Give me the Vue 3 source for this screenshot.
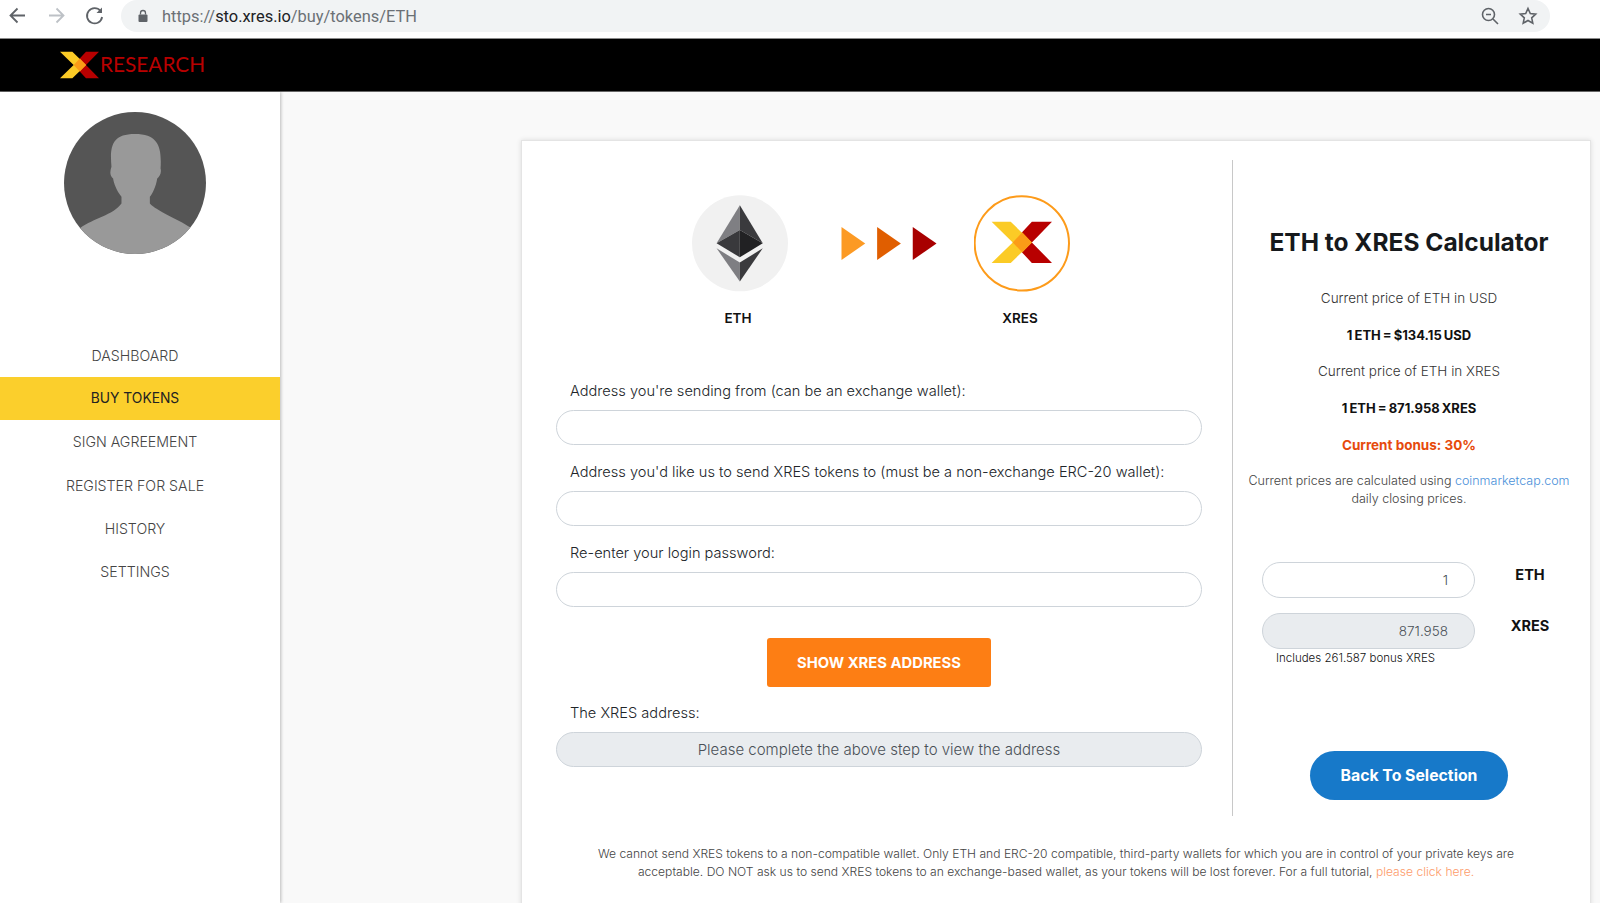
<script setup>
const navItems = ['DASHBOARD', 'BUY TOKENS', 'SIGN AGREEMENT', 'REGISTER FOR SALE', 'HISTORY', 'SETTINGS']
const fields = [
  "Address you're sending from (can be an exchange wallet):",
  "Address you'd like us to send XRES tokens to (must be a non-exchange ERC-20 wallet):",
  'Re-enter your login password:'
]
</script>

<template>
  <div class="page">
    <div class="browser">
      <svg class="nav-icon" width="38" height="32" viewBox="0 0 38 32" fill="none" stroke="#5f6368" stroke-width="1.8">
        <path d="M25 15.5H11M17.5 8.5l-7 7 7 7" />
      </svg>
      <svg class="nav-icon" width="38" height="32" viewBox="0 0 38 32" fill="none" stroke="#bdc1c6" stroke-width="1.8">
        <path d="M11 15.5h14M18.5 8.5l7 7-7 7" />
      </svg>
      <svg class="nav-icon" width="38" height="32" viewBox="0 0 38 32" fill="none" stroke="#5f6368" stroke-width="1.8">
        <path d="M24.5 11a7.6 7.6 0 1 0 1.6 6" />
        <path d="M26 7.5v5.5h-5.5z" fill="#5f6368" stroke="none" />
      </svg>
      <div class="omnibox">
        <svg width="12" height="14" viewBox="0 0 12 14">
          <path d="M3.5 5.5V4a2.500 2.500 0 0 1 5 0v1.500" fill="none" stroke="#5f6368" stroke-width="1.300" />
          <rect x="1.500" y="5.500" width="9" height="7.500" rx="1" fill="#5f6368" />
        </svg>
        <span class="url">https://<b>sto.xres.io</b>/buy/tokens/ETH</span>
        <svg class="zoom-icon" width="20" height="20" viewBox="0 0 20 20" fill="none" stroke="#5f6368" stroke-width="1.600">
          <circle cx="8.500" cy="8.500" r="6" />
          <path d="M13 13l5 5M6 8.500h5" />
        </svg>
        <svg class="star-icon" width="20" height="20" viewBox="0 0 20 20" fill="none" stroke="#5f6368" stroke-width="1.600">
          <path d="M10 2.500l2.300 5 5.400.6-4 3.700 1.100 5.400-4.800-2.700-4.800 2.700 1.100-5.400-4-3.700 5.400-.6z" />
        </svg>
      </div>
    </div>

    <header class="topbar">
      <svg class="logo" width="39" height="28" viewBox="0 0 60 41">
        <polygon points="40,0 60,0 40,20.500 60,41 40,41 21,20.500" fill="#b80000" />
        <polygon points="0,0 19,0 40,20.500 19,41 0,41 21,20.500" fill="#fbcb26" />
        <polygon points="30.500,10.500 40,20.500 30.500,30.500 21,20.500" fill="#fb9c17" />
      </svg>
      <span class="brand">RESEARCH</span>
    </header>

    <div class="body">
      <aside class="sidebar">
        <svg class="avatar" width="142" height="142" viewBox="193 336 425 425">
          <circle cx="405.500" cy="548.500" r="212.500" fill="#555" />
          <clipPath id="avatar-clip"><circle cx="405.500" cy="548.500" r="212.500" /></clipPath>
          <path clip-path="url(#avatar-clip)" fill="#999"
            d="M335 500C330 440 335 402 405 402C475 402 486 440 482 505C486 520 478 530 472 535C468 560 458 580 450 590V610C470 632 530 655 572 682L620 800H190L243 682C280 655 340 645 365 610V590C350 570 342 550 340 535C330 528 330 515 335 500Z" />
        </svg>
        <nav class="menu">
          <a v-for="item in navItems" :key="item" class="menu-item" :class="{ active: item === 'BUY TOKENS' }">{{ item }}</a>
        </nav>
      </aside>

      <main class="main">
        <section class="card">
          <div class="columns">
            <div class="left">
              <div class="swap">
                <div class="coin">
                  <svg width="96" height="97" viewBox="96 75 289 291">
                    <circle cx="240.500" cy="220" r="144.500" fill="#f1f1f1" />
                    <polygon points="240,105 170,220 240,180" fill="#7f7f83" />
                    <polygon points="240,105 309,220 240,180" fill="#3a3a3d" />
                    <polygon points="170,220 240,180 240,262" fill="#39393c" />
                    <polygon points="309,220 240,180 240,262" fill="#212123" />
                    <polygon points="170,235 240,278 240,335" fill="#7e7e82" />
                    <polygon points="309,235 240,278 240,335" fill="#3a3a3d" />
                  </svg>
                  <span class="coin-name">ETH</span>
                </div>
                <svg class="arrows" width="96" height="33" viewBox="543 170 288 100">
                  <polygon points="543,170 615,220 543,270" fill="#fc9a24" />
                  <polygon points="651,170 723,220 651,270" fill="#e05e00" />
                  <polygon points="759,170 831,220 759,270" fill="#a80000" />
                </svg>
                <div class="coin">
                  <svg width="96" height="97" viewBox="942 75 289 291">
                    <circle cx="1086" cy="220" r="142" fill="#fff" stroke="#fd9b1a" stroke-width="6" />
                    <g transform="translate(995 155) scale(3.030)">
                      <polygon points="40,0 60,0 40,20.500 60,41 40,41 21,20.500" fill="#b80000" />
                      <polygon points="0,0 19,0 40,20.500 19,41 0,41 21,20.500" fill="#fbcb26" />
                      <polygon points="30.500,10.500 40,20.500 30.500,30.500 21,20.500" fill="#fb9c17" />
                    </g>
                  </svg>
                  <span class="coin-name">XRES</span>
                </div>
              </div>

              <div v-for="label in fields" :key="label" class="field">
                <label>{{ label }}</label>
                <input class="pill" type="text" />
              </div>

              <div class="action">
                <button class="show-btn" type="button">SHOW XRES ADDRESS</button>
              </div>

              <div class="field address">
                <label>The XRES address:</label>
                <input class="pill center" type="text" readonly value="Please complete the above step to view the address" />
              </div>
            </div>

            <div class="right">
              <h2>ETH to XRES Calculator</h2>
              <p class="line first">Current price of ETH in USD</p>
              <p class="line strong">1 ETH = $134.15 USD</p>
              <p class="line">Current price of ETH in XRES</p>
              <p class="line strong">1 ETH = 871.958 XRES</p>
              <p class="line bonus">Current bonus: 30%</p>
              <p class="note">Current prices are calculated using <a>coinmarketcap.com</a><br />daily closing prices.</p>

              <div class="calc">
                <div class="calc-row">
                  <input class="pill amount" type="text" value="1" />
                  <span class="unit">ETH</span>
                </div>
                <div class="calc-row">
                  <input class="pill amount" type="text" readonly value="871.958" />
                  <span class="unit">XRES</span>
                </div>
                <small>Includes 261.587 bonus XRES</small>
              </div>

              <button class="back-btn" type="button">Back To Selection</button>
            </div>
          </div>

          <p class="disclaimer">
            We cannot send XRES tokens to a non-compatible wallet. Only ETH and ERC-20 compatible, third-party wallets for which you are in control of your private keys are<br />
            acceptable. DO NOT ask us to send XRES tokens to an exchange-based wallet, as your tokens will be lost forever. For a full tutorial, <a>please click here.</a>
          </p>
        </section>
      </main>
    </div>
  </div>
</template>

<style scoped>
.page {
  height: 903px;
  overflow: hidden;
  display: flex;
  flex-direction: column;
  background: #fff;
  font-family: Inter, "Liberation Sans", sans-serif;
  color: #212529;
}

.browser {
  height: 38px;
  flex: none;
  display: flex;
  align-items: flex-start;
  border-bottom: 1px solid #8a8a8a;
  background: #fff;
}

.nav-icon {
  flex: none;
}

.omnibox {
  margin-left: 7px;
  width: 1429px;
  height: 32px;
  display: flex;
  align-items: center;
  padding-left: 16px;
  box-sizing: border-box;
  background: #f1f3f4;
  border-radius: 0 16px 16px 16px;
  border-top-left-radius: 16px;
}

.url {
  margin-left: 13px;
  font-family: Roboto, sans-serif;
  font-size: 16.400px;
  color: #6b7075;
}

.url b {
  font-weight: 400;
  color: #202124;
}

.zoom-icon {
  margin-left: auto;
}

.star-icon {
  margin-left: 18px;
  margin-right: 12px;
}

.topbar {
  height: 52px;
  flex: none;
  display: flex;
  align-items: center;
  padding-left: 60px;
  background: #000;
  border-bottom: 1px solid #666;
}

.brand {
  margin-left: 1px;
  margin-bottom: 3px;
  font-family: Lato, sans-serif;
  font-weight: 400;
  font-size: 20.800px;
  color: #b80000;
}

.body {
  flex: 1;
  display: flex;
  min-height: 0;
}

.sidebar {
  width: 280px;
  flex: none;
  display: flex;
  flex-direction: column;
  padding-top: 20px;
  background: #fff;
  box-shadow: 1px 0 3px rgba(0, 0, 0, 0.25);
  z-index: 1;
}

.avatar {
  margin-left: 64px;
}

.menu {
  margin-top: 79.500px;
  display: flex;
  flex-direction: column;
}

.menu-item {
  height: 43.400px;
  line-height: 43.400px;
  padding-right: 10px;
  text-align: center;
  font-size: 14.200px;
  font-weight: 300;
  color: #444;
}

.menu-item.active {
  background: #fbcf2c;
  color: #222;
  font-size: 13.800px;
  font-weight: 400;
}

.main {
  flex: 1;
  padding: 48px 9px 0 241px;
  background: #f9f9f9;
}

.card {
  height: 900px;
  box-sizing: border-box;
  padding-top: 19px;
  background: #fff;
  border: 1px solid #e4e4e4;
  box-shadow: 0 0 5px rgba(0, 0, 0, 0.12);
}

.columns {
  display: flex;
}

.left {
  width: 711px;
  height: 656px;
  flex: none;
  box-sizing: border-box;
  padding: 35px 30px 0 34px;
  border-right: 1px solid #c8c8c8;
}

.swap {
  display: flex;
  align-items: flex-start;
  margin-left: 136px;
  margin-bottom: 52px;
}

.coin {
  width: 96px;
  display: flex;
  flex-direction: column;
  align-items: center;
}

.coin svg {
  display: block;
}

.coin-name {
  margin-top: 16px;
  padding-right: 4px;
  line-height: 20px;
  font-size: 13.500px;
  font-weight: 600;
  color: #111;
}

.arrows {
  margin: 32px 37px 0 53px;
}

.field {
  margin-bottom: 16px;
}

.field label {
  display: block;
  margin-left: 14px;
  margin-bottom: 8px;
  line-height: 22px;
  font-size: 14.600px;
  font-weight: 300;
  color: #212529;
}

.pill {
  display: block;
  box-sizing: border-box;
  width: 100%;
  height: 35px;
  padding: 0 20px;
  border: 1px solid #ced4da;
  border-radius: 18px;
  outline: none;
  background: #fff;
  font-family: Inter, "Liberation Sans", sans-serif;
  font-size: 15px;
  font-weight: 300;
  color: #495057;
}

.pill[readonly] {
  background: #e9ecef;
}

.center {
  text-align: center;
}

.action {
  display: flex;
  justify-content: center;
  margin-top: 31px;
}

.show-btn {
  width: 224px;
  height: 49px;
  border: none;
  border-radius: 3px;
  background: #fd7e14;
  color: #fff;
  font-family: Inter, "Liberation Sans", sans-serif;
  font-size: 14.800px;
  font-weight: 700;
}

.address {
  margin-top: 15px;
}

.right {
  width: 352px;
  flex: none;
  text-align: center;
}

.right h2 {
  margin: 64px 0 0;
  line-height: 36px;
  font-size: 24.500px;
  font-weight: 700;
  color: #16191c;
}

.line {
  margin: 0;
  height: 36.700px;
  line-height: 36.700px;
  font-size: 13.500px;
  font-weight: 300;
  color: #333;
}

.line.first {
  margin-top: 20px;
}

.line.strong {
  font-size: 13px;
  font-weight: 700;
  word-spacing: -1px;
  color: #111;
}

.line.bonus {
  font-weight: 700;
  color: #e64a0c;
}

.note {
  margin: 8.500px 0 0;
  line-height: 18px;
  font-size: 12.500px;
  font-weight: 300;
  color: #444;
}

.note a {
  color: #4a90d9;
}

.calc {
  margin-top: 54px;
  padding-left: 29px;
  text-align: left;
}

.calc-row {
  display: flex;
  align-items: flex-start;
  margin-bottom: 15px;
}

.calc-row:last-of-type {
  margin-bottom: 0;
}

.amount {
  width: 213px;
  height: 36px;
  flex: none;
  padding-right: 26px;
  font-size: 13.500px;
  text-align: right;
}

.unit {
  margin-top: 3px;
  width: 110px;
  line-height: 20px;
  text-align: center;
  font-size: 14.500px;
  font-weight: 700;
  color: #111;
}

.calc small {
  display: block;
  margin: 1px 0 0 14px;
  line-height: 16px;
  font-size: 11.500px;
  font-weight: 300;
  color: #111;
}

.back-btn {
  display: block;
  margin: 85px auto 0;
  width: 198px;
  height: 49px;
  border: none;
  border-radius: 25px;
  background: #1779c9;
  color: #fff;
  font-family: Inter, "Liberation Sans", sans-serif;
  font-size: 15.800px;
  font-weight: 700;
}

.disclaimer {
  margin: 29px 0 0;
  text-align: center;
  line-height: 18px;
  font-size: 12.100px;
  font-weight: 300;
  color: #444;
}

.disclaimer a {
  color: #fd9b6a;
}
</style>
